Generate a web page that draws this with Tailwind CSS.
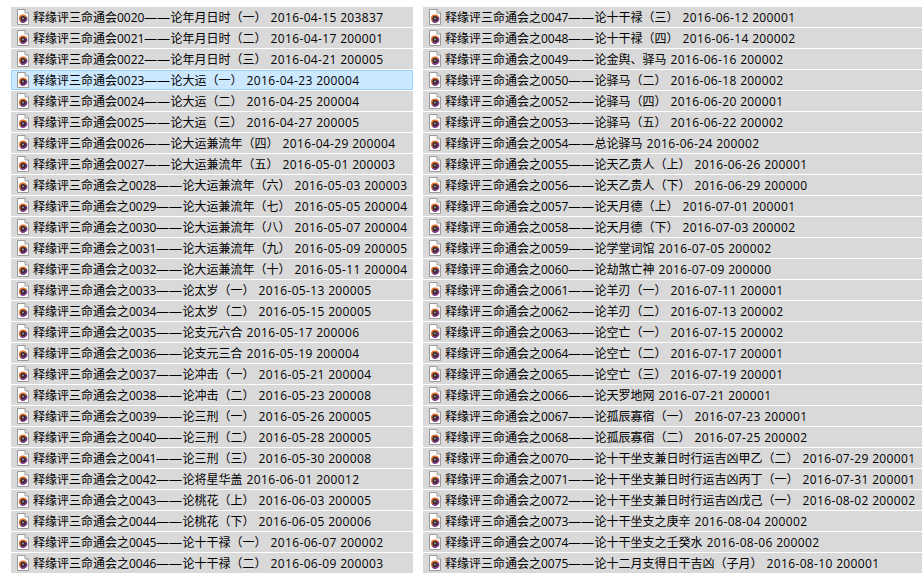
<!DOCTYPE html>
<html lang="en">
<head>
  <meta charset="UTF-8">
  <title>释缘评三命通会</title>
  <script src="https://cdn.jsdelivr.net/npm/@tailwindcss/browser@4"></script>
</head>
<body class="bg-white overflow-hidden">
  <div class="flex gap-[10px] pt-[7px] pl-[11px] w-[922px] h-[575px] overflow-hidden font-['Open_Sans','Noto_Sans_CJK_SC',sans-serif] text-[12px] text-black">
    <div id="left" class="flex flex-col gap-px w-[402px] shrink-0"></div>
    <div id="right" class="flex flex-col gap-px w-[499px] shrink-0"></div>
  </div>

  <script>
    const P = "释缘评三命通会";
    const left = [
      "0020——论年月日时（一） 2016-04-15 203837",
      "0021——论年月日时（二） 2016-04-17 200001",
      "0022——论年月日时（三） 2016-04-21 200005",
      "0023——论大运（一） 2016-04-23 200004",
      "0024——论大运（二） 2016-04-25 200004",
      "0025——论大运（三） 2016-04-27 200005",
      "0026——论大运兼流年（四） 2016-04-29 200004",
      "0027——论大运兼流年（五） 2016-05-01 200003",
      "之0028——论大运兼流年（六） 2016-05-03 200003",
      "之0029——论大运兼流年（七） 2016-05-05 200004",
      "之0030——论大运兼流年（八） 2016-05-07 200004",
      "之0031——论大运兼流年（九） 2016-05-09 200005",
      "之0032——论大运兼流年（十） 2016-05-11 200004",
      "之0033——论太岁（一） 2016-05-13 200005",
      "之0034——论太岁（二） 2016-05-15 200005",
      "之0035——论支元六合 2016-05-17 200006",
      "之0036——论支元三合 2016-05-19 200004",
      "之0037——论冲击（一） 2016-05-21 200004",
      "之0038——论冲击（二） 2016-05-23 200008",
      "之0039——论三刑（一） 2016-05-26 200005",
      "之0040——论三刑（二） 2016-05-28 200005",
      "之0041——论三刑（三） 2016-05-30 200008",
      "之0042——论将星华盖 2016-06-01 200012",
      "之0043——论桃花（上） 2016-06-03 200005",
      "之0044——论桃花（下） 2016-06-05 200006",
      "之0045——论十干禄（一） 2016-06-07 200002",
      "之0046——论十干禄（二） 2016-06-09 200003",
    ];
    const right = [
      "之0047——论十干禄（三） 2016-06-12 200001",
      "之0048——论十干禄（四） 2016-06-14 200002",
      "之0049——论金舆、驿马 2016-06-16 200002",
      "之0050——论驿马（二） 2016-06-18 200002",
      "之0052——论驿马（四） 2016-06-20 200001",
      "之0053——论驿马（五） 2016-06-22 200002",
      "之0054——总论驿马 2016-06-24 200002",
      "之0055——论天乙贵人（上） 2016-06-26 200001",
      "之0056——论天乙贵人（下） 2016-06-29 200000",
      "之0057——论天月德（上） 2016-07-01 200001",
      "之0058——论天月德（下） 2016-07-03 200002",
      "之0059——论学堂词馆 2016-07-05 200002",
      "之0060——论劫煞亡神 2016-07-09 200000",
      "之0061——论羊刃（一） 2016-07-11 200001",
      "之0062——论羊刃（二） 2016-07-13 200002",
      "之0063——论空亡（一） 2016-07-15 200002",
      "之0064——论空亡（二） 2016-07-17 200001",
      "之0065——论空亡（三） 2016-07-19 200001",
      "之0066——论天罗地网 2016-07-21 200001",
      "之0067——论孤辰寡宿（一） 2016-07-23 200001",
      "之0068——论孤辰寡宿（二） 2016-07-25 200002",
      "之0070——论十干坐支兼日时行运吉凶甲乙（二） 2016-07-29 200001",
      "之0071——论十干坐支兼日时行运吉凶丙丁（一） 2016-07-31 200001",
      "之0072——论十干坐支兼日时行运吉凶戊己（一） 2016-08-02 200002",
      "之0073——论十干坐支之庚辛 2016-08-04 200002",
      "之0074——论十干坐支之壬癸水 2016-08-06 200002",
      "之0075——论十二月支得日干吉凶（子月） 2016-08-10 200001",
    ];

    // media file icon
    const icon = `
      <svg width="12" height="16" viewBox="0 0 12 16" class="shrink-0">
        <path d="M.5.5H8L11.5 4V15.5H.5Z" fill="#fff" stroke="#9a9a9a"/>
        <path d="M8 .5V4H11.5" fill="#e8e8e8" stroke="#9a9a9a"/>
        <circle cx="6" cy="9.5" r="4" fill="#e0702a"/>
        <path d="M9.5 7.5A4 4 0 0 1 3 12.2Z" fill="#7a3a8a"/>
        <circle cx="6" cy="9.5" r="2.6" fill="#33262c"/>
        <circle cx="6" cy="9.5" r="1" fill="#a89f9f"/>
      </svg>`;

    function label(t) {
      const m = t.match(/^(.*?)——(.*) (\S+ \S+)$/);
      return `${P}${m[1]}<span class="inline-block w-[26px] origin-left scale-x-[1.09]">——</span>${m[2]} <span class="ml-px tracking-[0.35px]">${m[3]}</span>`;
    }

    function fill(id, rows) {
      document.getElementById(id).innerHTML = rows.map((t, i) => {
        const selected = id === "left" && i === 3;
        const box = selected
          ? "bg-[#cce8ff] border border-[#99d1ff] pl-[5px]"
          : "bg-[#d9d9d9] pl-[6px]";
        return `<div class="flex items-center gap-[4px] h-5 whitespace-pre leading-none ${box}">${icon}<span class="relative top-px">${label(t)}</span></div>`;
      }).join("");
    }
    fill("left", left);
    fill("right", right);
  </script>
</body>
</html>
